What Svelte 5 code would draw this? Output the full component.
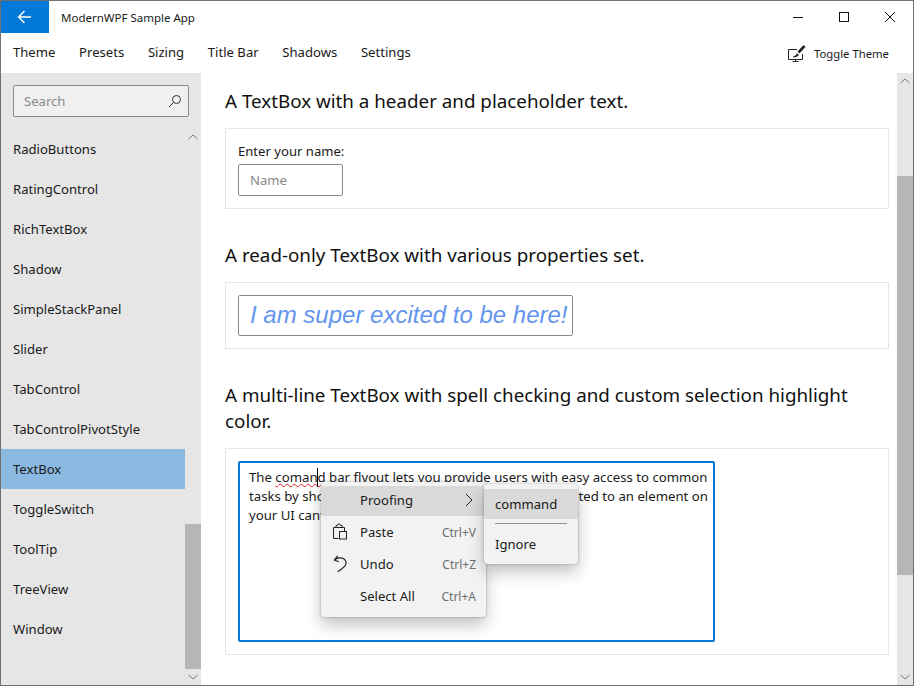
<script lang="ts">
  const menus = ["Theme", "Presets", "Sizing", "Title Bar", "Shadows", "Settings"];
  const items = [
    "RadioButtons",
    "RatingControl",
    "RichTextBox",
    "Shadow",
    "SimpleStackPanel",
    "Slider",
    "TabControl",
    "TabControlPivotStyle",
    "TextBox",
    "ToggleSwitch",
    "ToolTip",
    "TreeView",
    "Window",
  ];
</script>

<div class="window">
  <header class="titlebar">
    <button class="back" aria-label="Back">
      <svg width="16" height="16" viewBox="0 0 16 16" fill="none" stroke="#fff" stroke-width="1.4">
        <path d="M1.5 8H14M7.5 2 1.5 8l6 6" />
      </svg>
    </button>
    <span class="apptitle">ModernWPF Sample App</span>
    <div class="caption">
      <svg width="46" height="32" viewBox="0 0 46 32" stroke="#111" fill="none">
        <path d="M18 16.5h10" />
      </svg>
      <svg width="46" height="32" viewBox="0 0 46 32" stroke="#111" fill="none">
        <rect x="18.5" y="11.5" width="9" height="9" />
      </svg>
      <svg width="46" height="32" viewBox="0 0 46 32" stroke="#111" fill="none">
        <path d="M18 11l10 10M28 11 18 21" />
      </svg>
    </div>
  </header>

  <nav class="menubar">
    {#each menus as m}
      <span class="menuitem">{m}</span>
    {/each}
    <span class="toggle">
      <svg width="18" height="18" viewBox="0 0 18 18" fill="none" stroke="#222">
        <path d="M9 5.500H.5v10h14V10" />
        <path d="M7.500 15.500v2M4.500 17.500h6" />
        <path d="M10.500 8.500 16.500 2" stroke-width="2.600" />
        <path d="M5 13c2-.3 3-1.500 4-3.500l1.500 1.500C9.500 12.500 7.500 13.300 5 13z" fill="#222" stroke-width="0.6" />
      </svg>
      Toggle Theme
    </span>
  </nav>

  <div class="body">
    <aside class="sidebar">
      <div class="searchwrap">
        <div class="search">
          <span>Search</span>
          <svg width="14" height="14" viewBox="0 0 14 14" fill="none" stroke="#333">
            <circle cx="8.500" cy="5.500" r="4" />
            <path d="M5.500 8.500 1 13" />
          </svg>
        </div>
      </div>
      <div class="listarea">
        <ul class="list">
          {#each items as item}
            <li class:selected={item === "TextBox"}>{item}</li>
          {/each}
        </ul>
        <div class="scrollbar listbar">
          <svg class="chev" width="16" height="10" viewBox="0 0 16 10" fill="none" stroke="#777"><path d="M3.500 7 8 3l4.500 4" /></svg>
          <div class="fill"></div>
          <div class="thumb"></div>
          <svg class="chev" width="16" height="10" viewBox="0 0 16 10" fill="none" stroke="#777"><path d="M3.500 3 8 7l4.500-4" /></svg>
        </div>
      </div>
    </aside>

    <main class="content">
      <section class="page">
        <h2>A TextBox with a header and placeholder text.</h2>
        <div class="card first">
          <label for="name">Enter your name:</label>
          <div class="input" id="name">Name</div>
        </div>

        <h2>A read-only TextBox with various properties set.</h2>
        <div class="card second">
          <div class="readonly">I am super excited to be here!</div>
        </div>

        <h2>A multi-line TextBox with spell checking and custom selection highlight color.</h2>
        <div class="card third">
          <div class="editor">
            <p>
              The <span class="misspelt">comand</span> bar flyout lets you provide users with easy access to common<br />
              tasks by showing commands that lie contextually related to an element on<br />
              your UI canvas.
            </p>
            <i class="caret"></i>

            <div class="ctx">
              <div class="ctxrow active">
                <span class="label">Proofing</span>
                <svg class="arrow" width="8" height="14" viewBox="0 0 8 14" fill="none" stroke="#222"><path d="M1 1l6 6-6 6" /></svg>
              </div>
              <div class="ctxrow">
                <svg class="ico" width="16" height="18" viewBox="0 0 16 18" fill="none" stroke="#222">
                  <path d="M4 4.500H1.500v11h5M10 4.500h2.500v3.500" />
                  <path d="M4 4.500V2.500h1.500L6.200 1h1.600l.7 1.500H10v2z" />
                  <rect x="7.500" y="8.500" width="7" height="7.500" />
                </svg>
                <span class="label">Paste</span>
                <span class="key">Ctrl+V</span>
              </div>
              <div class="ctxrow">
                <svg class="ico" width="16" height="18" viewBox="0 0 16 18" fill="none" stroke="#222" stroke-width="1.200">
                  <path d="M5.700 1 2.300 5l4.400 1.700M2.300 5C7 1.500 14 2.500 14 8.300c0 2.700-3 5.200-8.300 8.400" />
                </svg>
                <span class="label">Undo</span>
                <span class="key">Ctrl+Z</span>
              </div>
              <div class="ctxrow">
                <span class="label">Select All</span>
                <span class="key">Ctrl+A</span>
              </div>
            </div>

            <div class="sub">
              <div class="subrow active">command</div>
              <hr />
              <div class="subrow">Ignore</div>
            </div>
          </div>
        </div>
      </section>

      <div class="scrollbar pagebar">
        <svg class="chev" width="16" height="10" viewBox="0 0 16 10" fill="none" stroke="#777"><path d="M3.500 7 8 3l4.500 4" /></svg>
        <div class="gap-top"></div>
        <div class="thumb"></div>
        <div class="fill"></div>
        <svg class="chev" width="16" height="10" viewBox="0 0 16 10" fill="none" stroke="#777"><path d="M3.500 3 8 7l4.500-4" /></svg>
      </div>
    </main>
  </div>
</div>

<style>
  :global(body) {
    margin: 0;
    background: #fff;
  }

  .window {
    box-sizing: border-box;
    width: 914px;
    height: 686px;
    border: 1px solid #6f6f6f;
    display: flex;
    flex-direction: column;
    overflow: hidden;
    font-family: "Noto Sans", "Open Sans", sans-serif;
    font-size: 13.100px;
    color: #1a1a1a;
    background: #fff;
  }

  .titlebar {
    height: 32px;
    display: flex;
    align-items: center;
    flex-shrink: 0;
  }

  .back {
    width: 48px;
    height: 32px;
    border: 0;
    padding: 0;
    background: #0078d7;
    display: flex;
    align-items: center;
    justify-content: center;
  }

  .apptitle {
    margin-left: 12px;
    font-size: 11.500px;
  }

  .caption {
    margin-left: auto;
    display: flex;
  }

  .caption svg {
    display: block;
  }

  .menubar {
    height: 40px;
    display: flex;
    align-items: center;
    padding: 0 24px 0 12px;
    gap: 23.700px;
    flex-shrink: 0;
  }

  .menuitem {
    position: relative;
    top: -1px;
  }

  .toggle {
    margin-left: auto;
    display: flex;
    align-items: center;
    gap: 8px;
    font-size: 11.300px;
  }

  .body {
    flex: 1;
    min-height: 0;
    display: flex;
  }

  .sidebar {
    width: 200px;
    background: #e6e6e6;
    display: flex;
    flex-direction: column;
    flex-shrink: 0;
  }

  .searchwrap {
    padding: 12px 12px 8px;
  }

  .search {
    box-sizing: border-box;
    height: 32px;
    border: 1px solid #8a8a8a;
    border-radius: 2px;
    background: #f0f0f0;
    display: flex;
    align-items: center;
    justify-content: space-between;
    padding: 0 6px 0 10px;
    color: #8a8a8a;
  }

  .listarea {
    flex: 1;
    min-height: 0;
    display: flex;
  }

  .list {
    flex: 1;
    list-style: none;
    margin: 0;
    padding: 4px 0 0;
  }

  .list li {
    height: 40px;
    line-height: 40px;
    padding-left: 12px;
  }

  .list li.selected {
    background: #8bb9e1;
  }

  .scrollbar {
    width: 16px;
    background: #e6e6e6;
    display: flex;
    flex-direction: column;
    flex-shrink: 0;
  }

  .chev {
    flex-shrink: 0;
    display: block;
    margin: 3px 0;
  }

  .fill {
    flex: 1;
  }

  .thumb {
    background: #b6b6b6;
  }

  .listbar .thumb {
    height: 145px;
  }

  .listbar .chev:first-child {
    margin-top: 7px;
  }

  .content {
    flex: 1;
    min-width: 0;
    display: flex;
  }

  .page {
    flex: 1;
    min-width: 0;
    padding: 0 8px 0 24px;
  }

  .pagebar .thumb {
    height: 399px;
  }

  .gap-top {
    height: 87px;
  }

  h2 {
    margin: 0;
    font-size: 18.800px;
    font-weight: 400;
    line-height: 26px;
    color: #111;
  }

  h2:first-child {
    margin-top: 15px;
  }

  .card {
    box-sizing: border-box;
    border: 1px solid #e6e6e6;
    padding: 12px;
    margin: 14px 0 33px;
  }

  .card.first {
    height: 81px;
  }

  .card.second {
    height: 67px;
  }

  .card.third {
    height: 207px;
    margin-bottom: 0;
  }

  label {
    display: block;
    line-height: 19px;
    padding-top: 1px;
    margin-bottom: 3px;
  }

  .input {
    box-sizing: border-box;
    width: 105px;
    height: 32px;
    border: 1px solid #8a8a8a;
    border-radius: 2px;
    padding-left: 11px;
    line-height: 30px;
    color: #8a8a8a;
  }

  .readonly {
    box-sizing: border-box;
    width: fit-content;
    height: 41px;
    border: 1px solid #8a8a8a;
    border-radius: 2px;
    padding: 0 4px 0 11px;
    font: italic 24px/38px "Liberation Sans", Arial, sans-serif;
    color: #6495ed;
    white-space: nowrap;
  }

  .editor {
    position: relative;
    box-sizing: border-box;
    width: 477px;
    height: 181px;
    border: 2px solid #0078d7;
    border-radius: 2px;
    padding: 5px 9px;
  }

  .editor p {
    margin: 0;
    font-size: 13.200px;
    line-height: 19px;
    white-space: nowrap;
  }

  .misspelt {
    text-decoration: underline wavy #e02020 1px;
  }

  .caret {
    position: absolute;
    left: 77px;
    top: 5px;
    width: 1px;
    height: 19px;
    background: #000;
  }

  .ctx,
  .sub {
    position: absolute;
    box-sizing: border-box;
    background: #f2f2f2;
    border-radius: 4px;
    box-shadow: 0 8px 16px rgba(0, 0, 0, 0.24), 0 0 3px rgba(0, 0, 0, 0.28);
  }

  .ctx {
    left: 81px;
    top: 19px;
    width: 165px;
    height: 135px;
    padding-top: 4px;
  }

  .ctxrow {
    position: relative;
    height: 32px;
    display: flex;
    align-items: center;
    padding: 0 10px 0 39px;
  }

  .ctxrow.active {
    box-sizing: border-box;
    height: 30px;
    padding-bottom: 2px;
    background: #d9d9d9;
  }

  .ico {
    position: absolute;
    left: 11px;
    top: 7px;
  }

  .arrow {
    margin-left: auto;
    margin-right: 3px;
  }

  .key {
    margin-left: auto;
    font-size: 12px;
    color: #6e6e6e;
  }

  .sub {
    left: 244px;
    top: 21px;
    width: 94px;
    height: 80px;
    padding-top: 5px;
  }

  .subrow {
    height: 30px;
    line-height: 30px;
    padding-left: 11px;
  }

  .subrow.active {
    background: #d9d9d9;
  }

  hr {
    border: 0;
    border-top: 1px solid #8e8e8e;
    margin: 4px 11px 5px;
  }
</style>
